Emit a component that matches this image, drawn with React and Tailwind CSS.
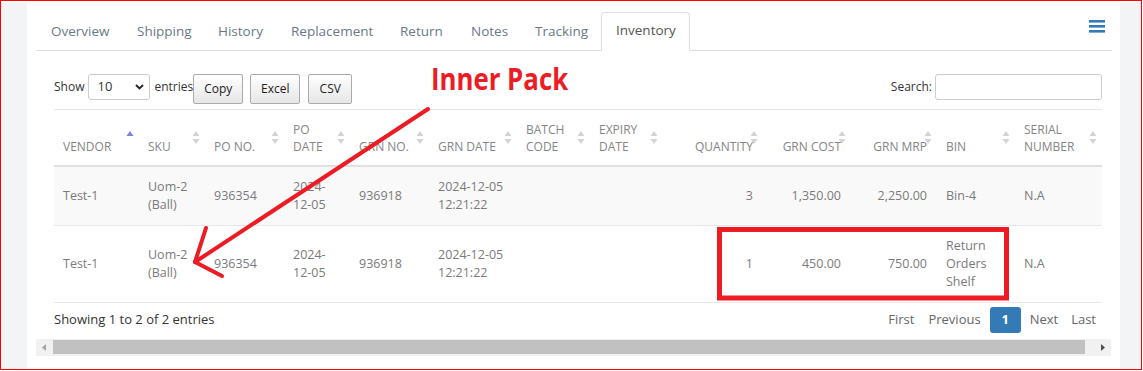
import React from 'react';

// column widths of the inventory grid, px (sum = 1048)
const cols = [85, 66, 79, 66, 79, 88, 73, 73, 100, 88, 86, 78, 87];

const heads = [
  { t: ['VENDOR'], sorted: true },
  { t: ['SKU'] },
  { t: ['PO NO.'] },
  { t: ['PO', 'DATE'] },
  { t: ['GRN NO.'] },
  { t: ['GRN DATE'] },
  { t: ['BATCH', 'CODE'] },
  { t: ['EXPIRY', 'DATE'] },
  { t: ['QUANTITY'], right: true },
  { t: ['GRN COST'], right: true },
  { t: ['GRN MRP'], right: true },
  { t: ['BIN'] },
  { t: ['SERIAL', 'NUMBER'] },
];

const rows = [
  [['Test-1'], ['Uom-2', '(Ball)'], ['936354'], ['2024-', '12-05'], ['936918'], ['2024-12-05', '12:21:22'], [''], [''], ['3'], ['1,350.00'], ['2,250.00'], ['Bin-4'], ['N.A']],
  [['Test-1'], ['Uom-2', '(Ball)'], ['936354'], ['2024-', '12-05'], ['936918'], ['2024-12-05', '12:21:22'], [''], [''], ['1'], ['450.00'], ['750.00'], ['Return', 'Orders', 'Shelf'], ['N.A']],
];

const tabs = [
  ['Overview', 86], ['Shipping', 81], ['History', 73], ['Replacement', 109],
  ['Return', 71], ['Notes', 64], ['Tracking', 81],
];

function SortIcon({ sorted }) {
  return (
    <svg width="8" height="14" viewBox="0 0 8 14" className="absolute right-[5px] top-[21px]">
      <path d="M4 0 L7.5 5 L0.5 5 Z" fill={sorted ? '#7b82d8' : '#d4d4d4'} />
      {!sorted && <path d="M4 13 L7.5 8 L0.5 8 Z" fill="#d4d4d4" />}
    </svg>
  );
}

function Lines({ l }) {
  return l.map((s, i) => <React.Fragment key={i}>{i > 0 && <br />}{s}</React.Fragment>);
}

function TabBar() {
  return (
    <div className="mt-[9px] flex h-[39px] items-end border-b border-[#ddd]">
      {tabs.map(([t, w]) => (
        <div key={t} style={{ width: w }} className="flex h-[37px] items-center pl-[15px] text-[13.5px] text-[#6a7886]">{t}</div>
      ))}
      <div className="-mb-px flex h-[39px] w-[89px] items-center rounded-t-[4px] border border-b-white border-[#ddd] pb-[2px] pl-[14px] text-[13.5px] text-[#555]">
        Inventory
      </div>
      <svg width="16" height="13" viewBox="0 0 16 13" className="ml-auto mr-[7px] self-start mt-[8px]">
        <rect x="0" y="0" width="16" height="2.6" fill="#337ab7" />
        <rect x="0" y="5" width="16" height="2.6" fill="#337ab7" />
        <rect x="0" y="10" width="16" height="2.6" fill="#337ab7" />
      </svg>
    </div>
  );
}

function Controls() {
  return (
    <div className="ml-[18px] mt-[23px] flex w-[1048px] items-start justify-between text-[12px] text-[#333]">
      <div className="flex items-start">
        <div className="flex h-[26px] items-center gap-[4px]">
          <span>Show</span>
          <div className="flex h-[26px] w-[62px] items-center justify-between rounded-[3px] border border-[#ccc] bg-white pl-[8px] pr-[5px] text-[13px]">
            <span>10</span>
            <svg width="9" height="6" viewBox="0 0 9 6"><path d="M1 1 L4.5 4.5 L8 1" fill="none" stroke="#222" strokeWidth="1.8" /></svg>
          </div>
          <span>entries</span>
        </div>
        {[['Copy', 50, 0], ['Excel', 50, 7], ['CSV', 44, 8]].map(([b, w, m]) => (
          <div key={b} style={{ width: w, marginLeft: m }}
            className="flex h-[30px] items-center justify-center rounded-[2px] border border-[#aaa] bg-linear-to-b from-white to-[#e6e6e6] text-[12px] text-[#222]">
            {b}
          </div>
        ))}
      </div>
      <div className="flex h-[26px] items-center gap-[3px]">
        <span>Search:</span>
        <div className="h-[26px] w-[167px] rounded-[3px] border border-[#ccc] bg-white" />
      </div>
    </div>
  );
}

function Grid() {
  return (
    <table className="ml-[18px] mt-[5px] w-[1048px] table-fixed border-collapse text-[#7a7a7a]">
      <colgroup>{cols.map((w, i) => <col key={i} style={{ width: w }} />)}</colgroup>
      <thead>
        <tr className="border-t border-[#e8e8e8] border-b-2 border-b-[#e0e0e0]">
          {heads.map((h, i) => (
            <th key={i} className={`relative h-[56px] whitespace-nowrap pb-[10px] pl-[9px] pr-[10px] align-bottom text-[12px] font-normal leading-[17px] text-[#858585] ${h.right ? 'text-right' : 'text-left'}`}>
              <Lines l={h.t} />
              <SortIcon sorted={h.sorted} />
            </th>
          ))}
        </tr>
      </thead>
      <tbody>
        {rows.map((r, ri) => (
          <tr key={ri} className={`border-b border-[#e8e8e8] ${ri === 0 ? 'bg-[#f9f9f9]' : 'bg-white'}`}>
            {r.map((c, ci) => (
              <td key={ci} className={`py-[11px] pl-[9px] pr-[10px] align-middle text-[12.5px] leading-[18px] ${heads[ci].right ? 'text-right' : 'text-left'}`}>
                <Lines l={c} />
              </td>
            ))}
          </tr>
        ))}
      </tbody>
    </table>
  );
}

function Footer() {
  return (
    <div className="ml-[18px] mt-[4px] flex h-[26px] w-[1048px] items-center justify-between text-[13px]">
      <span className="text-[#333]">Showing 1 to 2 of 2 entries</span>
      <div className="flex items-center pr-[6px] text-[#666]">
        <span>First</span>
        <span className="ml-[14px]">Previous</span>
        <span className="ml-[9px] flex h-[26px] w-[31px] items-center justify-center rounded-[3px] bg-[#337ab7] font-bold text-white">1</span>
        <span className="ml-[9px]">Next</span>
        <span className="ml-[13px]">Last</span>
      </div>
    </div>
  );
}

function ScrollTrack() {
  return (
    <div className="mt-[6px] flex h-[17px] w-[1075px] items-center bg-[#f1f1f1]">
      <svg width="17" height="17" viewBox="0 0 17 17"><path d="M6 8.5 L10 5 L10 12 Z" fill="#a3a3a3" /></svg>
      <div className="h-[14px] w-[1032px] bg-[#c1c1c1]" />
      <svg width="26" height="17" viewBox="0 0 26 17" className="ml-auto"><path d="M20 8.5 L16 5 L16 12 Z" fill="#505050" /></svg>
    </div>
  );
}

export default function App() {
  return (
    <div className="relative h-[370px] w-[1142px] overflow-hidden border border-[#ff0000] bg-white font-['Open_Sans',sans-serif]">
      <div className="flex h-full pt-[2px]">
        <div className="w-[26px] bg-[#f3f4f6]" />
        <div className="w-[1093px] bg-white pl-[9px] pr-[8px]">
          <TabBar />
          <Controls />
          <Grid />
          <Footer />
          <ScrollTrack />
        </div>
        <div className="w-[21px] bg-[#f3f4f6]" />
      </div>

      {/* screenshot annotations */}
      <div className="absolute left-[430px] top-[60px] origin-left scale-x-[0.86] whitespace-nowrap text-[30px] font-bold leading-[36px] text-[#ed1c24]">
        Inner Pack
      </div>
      <svg width="1143" height="371" className="pointer-events-none absolute -left-px -top-px">
        <g stroke="#ed1c24" strokeWidth="4" fill="none" strokeLinecap="round">
          <line x1="428" y1="109" x2="195" y2="262" />
          <line x1="195" y1="262" x2="206" y2="228" />
          <line x1="195" y1="262" x2="222" y2="276" />
        </g>
        <rect x="719.5" y="229.5" width="287" height="68.5" stroke="#ed1c24" strokeWidth="5" fill="none" />
      </svg>
    </div>
  );
}
